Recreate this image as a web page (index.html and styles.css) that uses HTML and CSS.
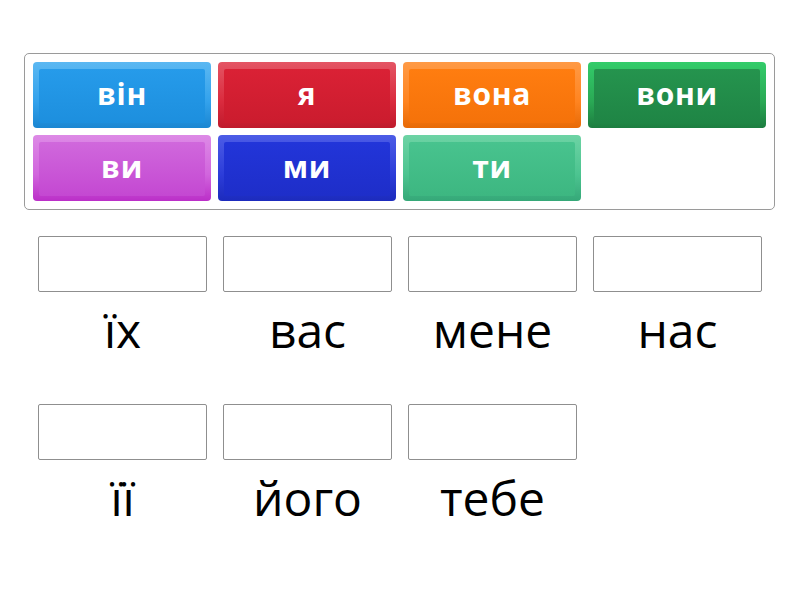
FILE: index.html
```html
<!DOCTYPE html>
<html lang="uk">
<head>
<meta charset="utf-8">
<link rel="stylesheet" href="styles.css">
</head>
<body>
<div class="bank">
  <div class="tile blue"><div class="face">він</div></div>
  <div class="tile red"><div class="face">я</div></div>
  <div class="tile orange"><div class="face">вона</div></div>
  <div class="tile dgreen"><div class="face">вони</div></div>
  <div class="tile purple"><div class="face">ви</div></div>
  <div class="tile navy"><div class="face">ми</div></div>
  <div class="tile teal"><div class="face">ти</div></div>
</div>
<div class="targets">
  <div class="slot"><div class="box"></div><div class="label">їх</div></div>
  <div class="slot"><div class="box"></div><div class="label">вас</div></div>
  <div class="slot"><div class="box"></div><div class="label">мене</div></div>
  <div class="slot"><div class="box"></div><div class="label">нас</div></div>
  <div class="slot"><div class="box"></div><div class="label">її</div></div>
  <div class="slot"><div class="box"></div><div class="label">його</div></div>
  <div class="slot"><div class="box"></div><div class="label">тебе</div></div>
</div>
</body>
</html>
```

FILE: styles.css
```css
html, body {
  margin: 0;
  padding: 0;
  background: #fff;
  font-family: "Open Sans", "Noto Sans", sans-serif;
}
.bank {
  margin: 53px 0 0 24px;
  width: 751px;
  box-sizing: border-box;
  border: 1px solid #9a9a9a;
  border-radius: 5px;
  padding: 8px 8px 8px;
  display: grid;
  grid-template-columns: repeat(4, 1fr);
  grid-auto-rows: 66px;
  gap: 7px;
}
.tile {
  border-radius: 4px;
  padding: 7px 6px 5px;
  box-sizing: border-box;
  display: flex;
}
.face {
  flex: 1;
  border-radius: 2px;
  display: flex;
  align-items: center;
  justify-content: center;
  color: #fff;
  font-weight: 700;
  font-size: 30px;
  letter-spacing: 0.7px;
  line-height: 1;
  padding-bottom: 4px;
}
.blue { background: linear-gradient(#5bb8f2, #33a2ec 60%, #1a86d2); }
.blue .face { background: linear-gradient(#269bea, #1d8fde); }
.red { background: linear-gradient(#e45564, #da2b3e 60%, #c01a2c); }
.red .face { background: linear-gradient(#da2135, #cb1c2e); }
.orange { background: linear-gradient(#ff9a45, #ff8420 60%, #e86a06); }
.orange .face { background: linear-gradient(#ff7d10, #f5720a); }
.dgreen { background: linear-gradient(#33cc6a, #2aa955 60%, #1d7d40); }
.dgreen .face { background: linear-gradient(#25944e, #1f8545); }
.purple { background: linear-gradient(#dd8ae6, #d165dd 60%, #bb2fc8); }
.purple .face { background: linear-gradient(#d068dc, #c448d2); }
.navy { background: linear-gradient(#4c5ce6, #2c3dd9 60%, #1c2bbd); }
.navy .face { background: linear-gradient(#2235d9, #1e2ec9); }
.teal { background: linear-gradient(#6dd3a4, #4cc490 60%, #35a878); }
.teal .face { background: linear-gradient(#48c38e, #3db781); }

.targets {
  margin: 26px auto 0;
  width: 724px;
  display: grid;
  grid-template-columns: repeat(4, 169px);
  column-gap: 16px;
  row-gap: 42px;
}
.slot {
  display: flex;
  flex-direction: column;
  align-items: center;
  gap: 6px;
}
.box {
  width: 169px;
  height: 56px;
  box-sizing: border-box;
  border: 1px solid #8f8f8f;
  border-radius: 2px;
}
.label {
  font-size: 48px;
  line-height: 64px;
  color: #000;
}
```
